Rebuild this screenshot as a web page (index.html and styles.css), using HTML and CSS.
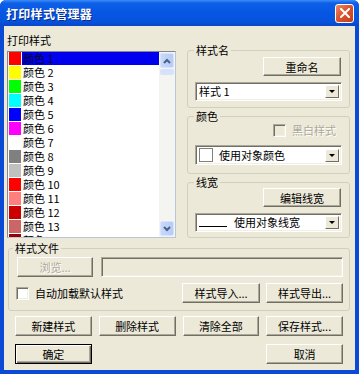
FILE: index.html
```html
<!DOCTYPE html>
<html>
<head>
    <title>打印样式管理器</title>
    <link rel="stylesheet" href="styles.css">
</head>
<body>
    <div class="window">
        <div class="titlebar">
            <span class="title">打印样式管理器</span>
            <span class="close">
                <svg width="10" height="10" viewBox="0 0 10 10"><path d="M1 1L9 9M9 1L1 9" stroke="#fff" stroke-width="2" stroke-linecap="square"/></svg>
            </span>
        </div>

        <div class="client">
            <div class="top">
                <div class="left">
                    <div class="label">打印样式</div>
                    <div class="listbox">
                        <div class="items">
                            <div class="item selected"><span class="swatch" style="background:#ff0000"></span><span class="name">颜色 1</span></div>
                            <div class="item"><span class="swatch" style="background:#ffff00"></span><span class="name">颜色 2</span></div>
                            <div class="item"><span class="swatch" style="background:#00ff00"></span><span class="name">颜色 3</span></div>
                            <div class="item"><span class="swatch" style="background:#00ffff"></span><span class="name">颜色 4</span></div>
                            <div class="item"><span class="swatch" style="background:#0000ff"></span><span class="name">颜色 5</span></div>
                            <div class="item"><span class="swatch" style="background:#ff00ff"></span><span class="name">颜色 6</span></div>
                            <div class="item"><span class="swatch" style="background:#ffffff"></span><span class="name">颜色 7</span></div>
                            <div class="item"><span class="swatch" style="background:#808080"></span><span class="name">颜色 8</span></div>
                            <div class="item"><span class="swatch" style="background:#c0c0c0"></span><span class="name">颜色 9</span></div>
                            <div class="item"><span class="swatch" style="background:#ff0000"></span><span class="name">颜色 10</span></div>
                            <div class="item"><span class="swatch" style="background:#ff7f7f"></span><span class="name">颜色 11</span></div>
                            <div class="item"><span class="swatch" style="background:#cc0000"></span><span class="name">颜色 12</span></div>
                            <div class="item"><span class="swatch" style="background:#cc6666"></span><span class="name">颜色 13</span></div>
                            <div class="item"><span class="swatch" style="background:#990000"></span><span class="name">颜色 14</span></div>
                        </div>
                        <div class="scrollbar">
                            <div class="sb-btn">
                                <svg width="8" height="6" viewBox="0 0 8 6"><path d="M1 5L4 2L7 5" fill="none" stroke="#4d6185" stroke-width="2"/></svg>
                            </div>
                            <div class="sb-track"><div class="sb-thumb"></div></div>
                            <div class="sb-btn">
                                <svg width="8" height="6" viewBox="0 0 8 6"><path d="M1 1L4 4L7 1" fill="none" stroke="#4d6185" stroke-width="2"/></svg>
                            </div>
                        </div>
                    </div>
                </div>

                <div class="right">
                    <fieldset class="group name-group">
                        <legend>样式名</legend>
                        <div class="btn-row"><button class="btn">重命名</button></div>
                        <div class="combo"><span class="combo-text">样式 1</span><span class="combo-arrow"></span></div>
                    </fieldset>

                    <fieldset class="group color-group">
                        <legend>颜色</legend>
                        <div class="check-row disabled"><span class="checkbox"></span><span>黑白样式</span></div>
                        <div class="combo"><span class="color-box"></span><span class="combo-text">使用对象颜色</span><span class="combo-arrow"></span></div>
                    </fieldset>

                    <fieldset class="group width-group">
                        <legend>线宽</legend>
                        <div class="btn-row"><button class="btn">编辑线宽</button></div>
                        <div class="combo"><span class="line-sample"></span><span class="combo-text">使用对象线宽</span><span class="combo-arrow"></span></div>
                    </fieldset>
                </div>
            </div>

            <fieldset class="group file-group">
                <legend>样式文件</legend>
                <div class="file-row">
                    <button class="btn disabled">浏览...</button>
                    <div class="field"></div>
                </div>
                <div class="file-row">
                    <div class="check-row"><span class="checkbox white"></span><span>自动加载默认样式</span></div>
                    <button class="btn import">样式导入...</button>
                    <button class="btn">样式导出...</button>
                </div>
            </fieldset>

            <div class="actions">
                <button class="btn">新建样式</button>
                <button class="btn">删除样式</button>
                <button class="btn">清除全部</button>
                <button class="btn">保存样式...</button>
                <button class="btn default">确定</button>
                <button class="btn cancel">取消</button>
            </div>
        </div>
    </div>
</body>
</html>
```

FILE: styles.css
```css
body {
    margin: 0;
    background: #fff;
    font-family: "Noto Sans CJK SC", "Liberation Sans", sans-serif;
    font-size: 11px;
    color: #000;
}
.window {
    width: 359px;
    height: 374px;
    box-sizing: border-box;
    display: flex;
    flex-direction: column;
    background: #0a4ad4;
    border-radius: 6px 6px 0 0;
    overflow: hidden;
}
.titlebar {
    height: 26px;
    flex-shrink: 0;
    display: flex;
    align-items: center;
    justify-content: space-between;
    padding: 0 5px 0 6px;
    background: linear-gradient(#3d8ef8 0, #0d5fe8 12%, #0656e2 50%, #0652dc 85%, #0a45c6 100%);
}
.title {
    color: #fff;
    font-size: 12px;
    font-weight: bold;
    letter-spacing: 0.3px;
    text-shadow: 1px 1px 0 #0b2a8c;
}
.close {
    width: 19px;
    height: 19px;
    box-sizing: border-box;
    border: 1px solid #fff;
    border-radius: 3px;
    background: linear-gradient(135deg, #f08a63 0, #dc5430 45%, #c23d1a 100%);
    display: flex;
    align-items: center;
    justify-content: center;
}
.client {
    flex: 1;
    margin: 0 4px 4px 4px;
    padding: 7px 5px 0 4px;
    background: #ece9d8;
}
.top {
    display: flex;
    gap: 11px;
}
.left {
    width: 168px;
}
.label {
    line-height: 14px;
    margin-bottom: 4px;
    margin-left: -1px;
}
.listbox {
    height: 187px;
    box-sizing: border-box;
    margin-left: -1px;
    border: 1px solid;
    border-color: #828790 #b8c6d6 #b8c6d6 #828790;
    background: #fff;
    display: flex;
    overflow: hidden;
}
.items {
    flex: 1;
}
.item {
    height: 14px;
    display: flex;
    align-items: flex-start;
}
.swatch {
    width: 12px;
    height: 13px;
    margin: 0 1px 0 1px;
    flex-shrink: 0;
}
.name {
    flex: 1;
    height: 13px;
    line-height: 13px;
    padding-left: 1px;
}
.item.selected .name {
    background: #0000ee;
    color: #000030;
}
.scrollbar {
    width: 16px;
    display: flex;
    flex-direction: column;
    background: #f4f4f0;
    padding: 1px 0 1px 0;
    box-sizing: border-box;
}
.sb-btn {
    height: 13px;
    margin: 0 1px;
    border-radius: 2px;
    background: linear-gradient(90deg, #c9d8fc, #b6cbf7);
    border: 1px solid #d8e4fc;
    display: flex;
    align-items: center;
    justify-content: center;
}
.sb-track {
    flex: 1;
    padding: 1px 1px 0;
}
.sb-thumb {
    height: 6px;
    border-radius: 2px;
    background: #d6e2fb;
}
.right {
    width: 163px;
    margin-top: 11px;
    display: flex;
    flex-direction: column;
    gap: 2px;
}
.group {
    margin: 0;
    padding: 1px 7px 6px;
    border: 1px solid #d0d0bf;
    border-radius: 3px;
    min-width: 0;
}
legend {
    padding: 0 2px;
    margin-left: -1px;
    line-height: 12px;
}
.btn-row {
    display: flex;
    justify-content: flex-end;
}
.btn {
    height: 20px;
    width: 78px;
    padding: 0;
    font-family: inherit;
    font-size: 11px;
    color: #000;
    background: #ece9d8;
    border: 1px solid;
    border-color: #fff #716f64 #716f64 #fff;
    box-shadow: inset -1px -1px 0 #aca899;
}
.name-group .btn-row,
.width-group .btn-row {
    margin-bottom: 6px;
}
.name-group .btn,
.width-group .btn {
    height: 19px;
    margin-right: 1px;
}
.combo {
    height: 19px;
    box-sizing: border-box;
    display: flex;
    align-items: center;
    background: #fff;
    border: 1px solid;
    border-color: #aca899 #fff #fff #aca899;
    box-shadow: inset 1px 1px 0 #716f64, inset -1px -1px 0 #f1efe2;
    padding: 2px 2px 2px 3px;
}
.combo-text {
    flex: 1;
    line-height: 13px;
}
.combo-arrow {
    width: 14px;
    height: 13px;
    box-sizing: border-box;
    background: #ece9d8;
    border: 1px solid;
    border-color: #fff #716f64 #716f64 #fff;
    position: relative;
}
.combo-arrow::after {
    content: "";
    position: absolute;
    left: 3px;
    top: 4px;
    border-left: 3px solid transparent;
    border-right: 3px solid transparent;
    border-top: 3px solid #000;
}
.color-group {
    padding-top: 2px;
    padding-bottom: 8px;
}
.color-group .combo {
    height: 20px;
    margin-top: 8px;
}
.color-box {
    width: 12px;
    height: 12px;
    border: 1px solid #808080;
    background: #fff;
    margin-right: 6px;
}
.line-sample {
    width: 28px;
    height: 10px;
    border-bottom: 1px solid #000;
    margin-right: 7px;
    align-self: flex-start;
}
.width-group {
    padding-top: 0;
    padding-bottom: 5px;
}
.check-row {
    display: flex;
    align-items: center;
    gap: 6px;
    line-height: 13px;
}
.color-group .check-row {
    justify-content: flex-end;
    margin-right: 6px;
}
.checkbox {
    width: 13px;
    height: 13px;
    box-sizing: border-box;
    border: 1px solid;
    border-color: #aca899 #fff #fff #aca899;
    box-shadow: inset 1px 1px 0 #716f64, inset -1px -1px 0 #f1efe2;
    background: #ece9d8;
}
.checkbox.white {
    background: #fff;
}
.disabled {
    color: #aca899;
    text-shadow: 1px 1px 0 #fff;
}
.file-group {
    margin-top: 4px;
    padding: 3px 6px 7px 8px;
}
.file-group legend {
    margin-left: -4px;
}
.file-row {
    display: flex;
    align-items: center;
}
.file-row + .file-row {
    margin-top: 6px;
}
.file-row .btn {
    width: 76px;
}
.field {
    flex: 1;
    height: 20px;
    box-sizing: border-box;
    margin-left: 8px;
    border: 1px solid;
    border-color: #aca899 #fff #fff #aca899;
    box-shadow: inset 1px 1px 0 #716f64, inset -1px -1px 0 #f1efe2;
}
.file-row .check-row {
    flex: 1;
    margin-left: -1px;
}
.file-row .import {
    width: 78px;
    margin-right: 6px;
}
.file-row .import + .btn {
    width: 77px;
}
.actions {
    display: grid;
    grid-template-columns: repeat(4, 1fr);
    column-gap: 7px;
    row-gap: 8px;
    margin: 5px 7px 0;
}
.actions .btn {
    width: auto;
}
.btn.default {
    border-color: #000;
    box-shadow: inset 1px 1px 0 #fff, inset -1px -1px 0 #716f64, inset -2px -2px 0 #aca899;
}
.btn.cancel {
    grid-column: 4;
}
```
